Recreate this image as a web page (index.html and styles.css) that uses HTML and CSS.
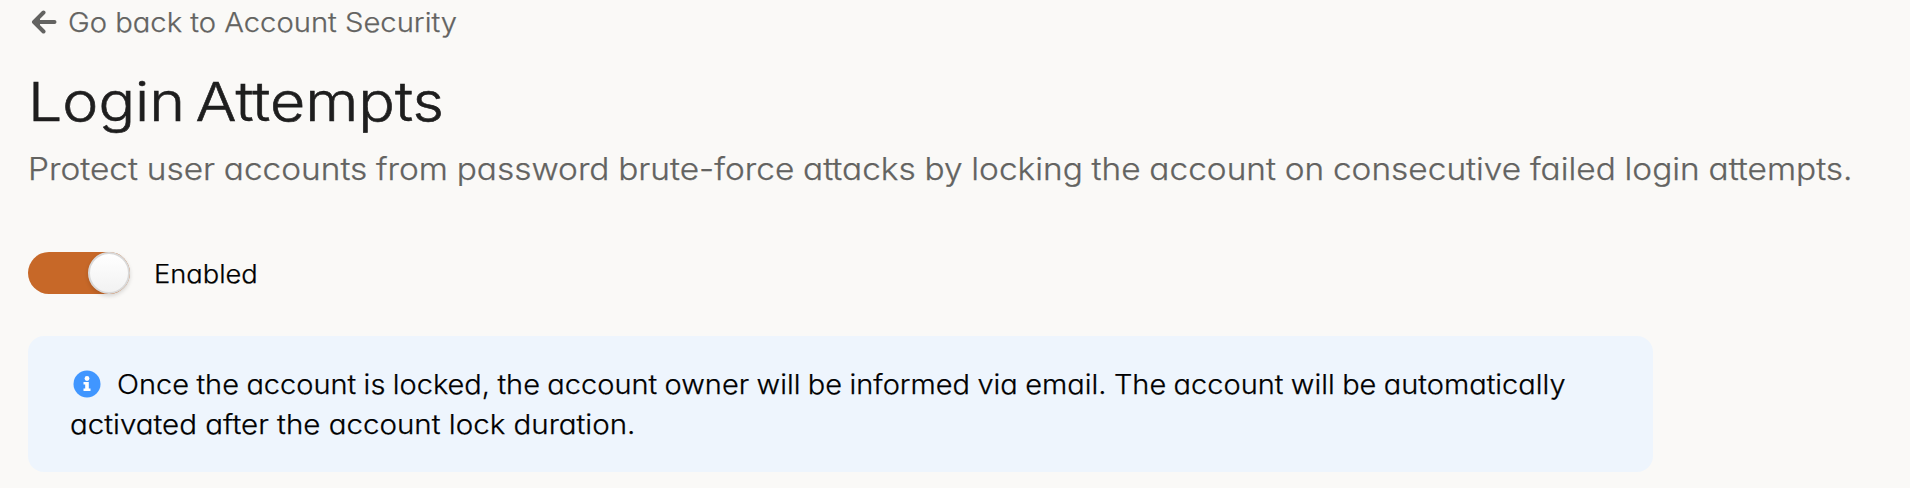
FILE: index.html
```html
<!DOCTYPE html>
<html lang="en">
<head>
<meta charset="utf-8">
<title>Login Attempts</title>
<link rel="stylesheet" href="styles.css">
</head>
<body>
<main class="page">
  <a class="back"><svg class="back-icon" viewBox="0 0 26 24"><path d="M23.500 12H4M12.500 2.500 3 12l9.500 9.500" fill="none" stroke="currentColor" stroke-width="4" stroke-linecap="round" stroke-linejoin="round"/><path d="M2 12 9 6v12z" fill="currentColor"/></svg><span class="wide back-text">Go back to Account Security</span></a>
  <h1 class="title"><span class="wide title-text">Login Attempts</span></h1>
  <p class="subtitle"><span class="wide subtitle-text">Protect user accounts from password brute-force attacks by locking the account on consecutive failed login attempts.</span></p>
  <div class="setting"><span class="toggle"><span class="knob"></span></span><span class="wide setting-label">Enabled</span></div>
  <div class="notice">
    <div class="line"><svg class="info" viewBox="0 0 28 28"><circle cx="14" cy="14" r="13.500" fill="#4096ff"/><circle cx="14" cy="8.500" r="2.400" fill="#fff"/><path d="M10.500 12h5.300v6.500h1.700v2.500h-7v-2.500h1.700v-4h-1.700z" fill="#fff"/></svg><span class="wide line-one">Once the account is locked, the account owner will be informed via email. The account will be automatically</span></div>
    <div class="line"><span class="wide line-two">activated after the account lock duration.</span></div>
  </div>
</main>
</body>
</html>
```
FILE: styles.css
```css
* { box-sizing: border-box; }
body { margin: 0; background: #faf9f7; color: #1e1e1e; font-family: Inter, sans-serif; font-weight: 300; font-feature-settings: "cv11" 1, "calt" 0; overflow: hidden; }
.page { padding: 0 28px; white-space: nowrap; }
.wide { display: inline-block; transform-origin: left center; -webkit-text-stroke: .25px currentColor; }
.back { display: flex; align-items: center; height: 45px; padding-left: 3px; gap: 11px; color: #636361; font-size: 27px; }
.back-icon { width: 26px; height: 24px; margin-top: -2px; }
.back-text { transform: scaleX(1.081); }
.title { margin: 21px 0 0; font-size: 54px; line-height: 72px; font-weight: 300; }
.title-text { transform: scaleX(1.127); word-spacing: -6px; -webkit-text-stroke: .6px currentColor; }
.subtitle { margin: 8px 0 0; font-size: 31px; line-height: 46px; color: #636361; }
.subtitle-text { transform: scaleX(1.078); word-spacing: -.6px; }
.setting { display: flex; align-items: center; gap: 24px; margin-top: 60px; height: 42px; font-size: 25.5px; color: #000; }
.setting-label { transform: scaleX(1.07); }
.toggle { display: flex; justify-content: flex-end; width: 102px; height: 42px; border-radius: 21px; background: #c76828; }
.knob { width: 42px; height: 42px; border-radius: 50%; background: linear-gradient(#fff, #f2f2f2); border: 2px solid #d9d9d9; box-shadow: 0 2px 4px rgba(0, 0, 0, .15); }
.notice { width: 1625px; height: 136px; margin-top: 42px; padding: 28px 42px; border-radius: 16px; background: #eef5fd; font-size: 27.5px; line-height: 40px; color: #000; }
.line { display: flex; align-items: center; height: 40px; }
.line-one { transform: scaleX(1.054); word-spacing: -.7px; }
.line-two { transform: scaleX(1.073); }
.info { width: 28px; height: 28px; margin: -1px 16px 0 3px; }
```
